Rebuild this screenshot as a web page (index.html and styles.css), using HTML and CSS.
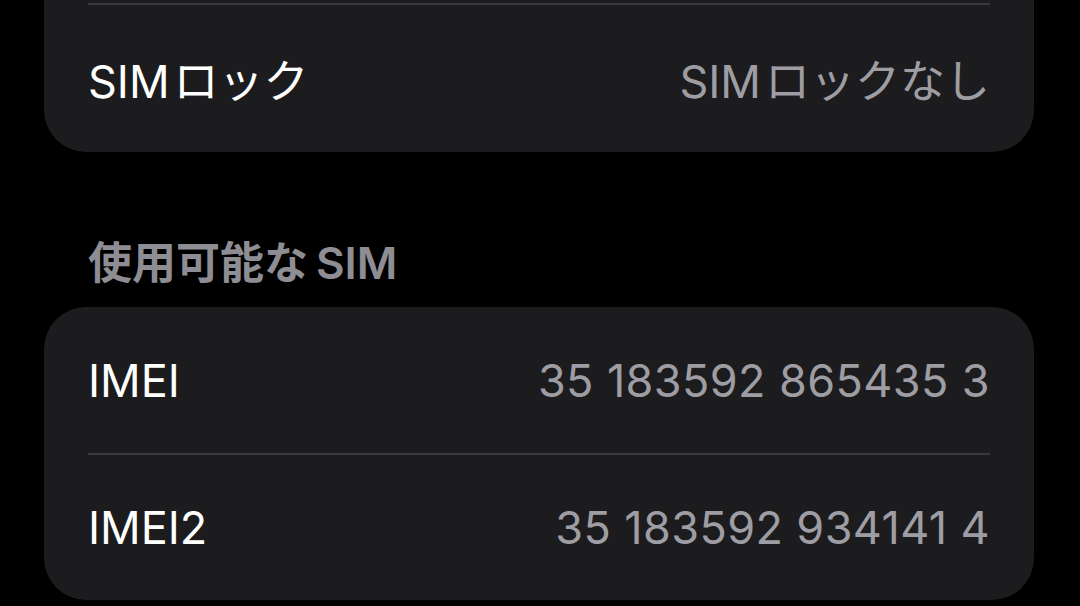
FILE: index.html
```html
<!DOCTYPE html>
<html lang="ja">
<head>
  <meta charset="UTF-8">
  <title>SIM</title>
  <link rel="stylesheet" href="styles.css">
</head>
<body>
  <div class="page">
    <div class="card card-cut">
      <div class="row">
        <span class="label"><span class="latin">SIM</span>ロック</span>
        <span class="value"><span class="latin">SIM</span>ロックなし</span>
      </div>
    </div>

    <div class="section-title">使用可能な<span class="latin-pre">SIM</span></div>

    <div class="card">
      <div class="row">
        <span class="label">IMEI</span>
        <span class="value digits">35 183592 865435 3</span>
      </div>
      <div class="row">
        <span class="label">IMEI2</span>
        <span class="value digits">35 183592 934141 4</span>
      </div>
    </div>
  </div>
</body>
</html>
```

FILE: styles.css
```css
body {
  margin: 0;
  background: #000;
  font-family: Inter, "Noto Sans CJK JP", sans-serif;
  color: #fff;
  overflow: hidden;
}

.page {
  width: 990px;
  margin-left: 44px;
}

.card {
  background: #1c1c1e;
  border-radius: 42px;
}

/* top of this card runs off the screen */
.card-cut {
  border-top-left-radius: 0;
  border-top-right-radius: 0;
  padding-top: 3px;
}

.card-cut .row {
  border-top: 2px solid #3a3a3d;
  height: 147px;
}

.row {
  margin: 0 44px;
  height: 146px;
  display: flex;
  align-items: center;
  justify-content: space-between;
}

.row + .row {
  border-top: 2px solid #3a3a3d;
  height: 145px;
}

.label {
  font-size: 45px;
}

.value {
  font-size: 45px;
  color: #9d9da3;
}

.digits {
  letter-spacing: 0.4px;
}

/* gap between latin and kana, like iOS does */
.latin {
  margin-right: 4px;
}

.latin-pre {
  margin-left: 8px;
}

.section-title {
  padding: 86px 44px 19px;
  font-size: 44px;
  line-height: 50px;
  font-weight: 600;
  color: #8d8d93;
}
```
